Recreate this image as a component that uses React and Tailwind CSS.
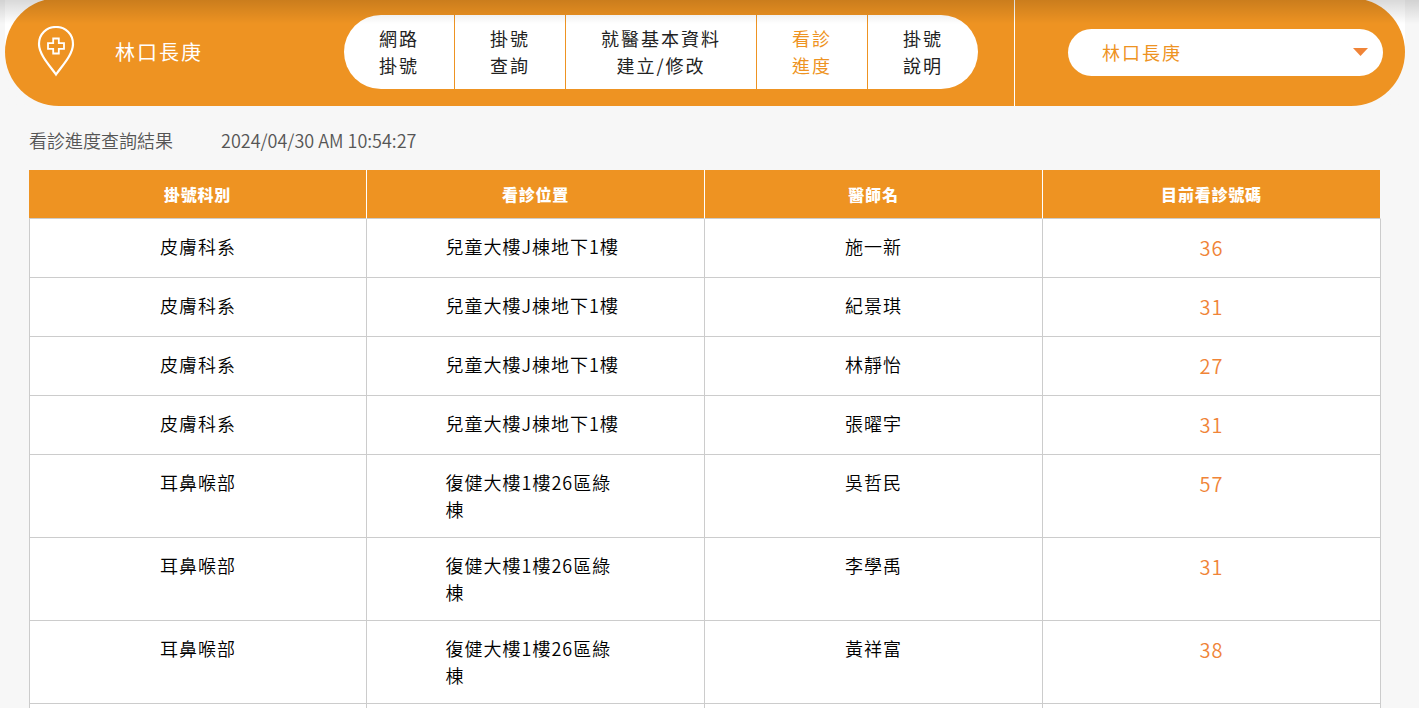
const navItems = [
  { lines: ["網路", "掛號"] },
  { lines: ["掛號", "查詢"] },
  { lines: ["就醫基本資料", "建立/修改"], wide: true },
  { lines: ["看診", "進度"], active: true },
  { lines: ["掛號", "說明"] },
];

const columns = ["掛號科別", "看診位置", "醫師名", "目前看診號碼"];

const rows = [
  { dept: "皮膚科系", place: "兒童大樓J棟地下1樓", doctor: "施一新", number: 36 },
  { dept: "皮膚科系", place: "兒童大樓J棟地下1樓", doctor: "紀景琪", number: 31 },
  { dept: "皮膚科系", place: "兒童大樓J棟地下1樓", doctor: "林靜怡", number: 27 },
  { dept: "皮膚科系", place: "兒童大樓J棟地下1樓", doctor: "張曜宇", number: 31 },
  { dept: "耳鼻喉部", place: "復健大樓1樓26區綠棟", doctor: "吳哲民", number: 57 },
  { dept: "耳鼻喉部", place: "復健大樓1樓26區綠棟", doctor: "李學禹", number: 31 },
  { dept: "耳鼻喉部", place: "復健大樓1樓26區綠棟", doctor: "黃祥富", number: 38 },
  { dept: "", place: "", doctor: "", number: "" },
];

function PinIcon() {
  return (
    <svg className="w-[38px] h-[52px]" viewBox="0 0 38 52" fill="none" stroke="white">
      <path
        d="M19 48.5C14 41 2 29 2 18C2 8 9.5 1 19 1S36 8 36 18C36 29 24 41 19 48.5Z"
        strokeWidth="2.2"
      />
      <path
        d="M16.2 12.500H21.800V17.200H27V22.800H21.800V27.500H16.200V22.800H11V17.200H16.200Z"
        strokeWidth="1.800"
      />
    </svg>
  );
}

function Header() {
  return (
    <header className="bg-linear-to-b from-white from-50% to-[#f7f7f7] to-50%">
      <div className="-mt-0.5 h-[108px] flex items-stretch rounded-full bg-[#ee9322] text-white overflow-hidden">
        <div className="flex-1 flex items-center gap-10 pl-8">
          <PinIcon />
          <h1 className="text-xl tracking-widest whitespace-nowrap">林口長庚</h1>
        </div>

        <nav className="flex items-center mr-9">
          <ul className="flex rounded-full overflow-hidden bg-white divide-x divide-[#ee9322]">
            {navItems.map((item) => (
              <li
                key={item.lines.join("")}
                className={item.wide ? "w-[191px]" : "w-[111px] last:w-[110px]"}
              >
                <a
                  href="#"
                  className={
                    "block py-[10px] text-center text-lg leading-[27px] tracking-[2px] " +
                    (item.active ? "text-[#ee9322]" : "text-[#222222]")
                  }
                >
                  {item.lines[0]}
                  <br />
                  {item.lines[1]}
                </a>
              </li>
            ))}
          </ul>
        </nav>

        <div className="w-[391px] flex items-center border-l border-white pl-[53px] pr-[22px]">
          <div className="relative w-full">
            <select
              aria-label="院區"
              className="w-full h-[47px] pl-[34px] pr-10 rounded-full appearance-none bg-white text-lg tracking-[2px] text-[#ee9322] cursor-pointer"
            >
              <option>林口長庚</option>
            </select>
            <svg
              className="absolute right-[15px] top-[19px] w-[15px] h-2 pointer-events-none"
              viewBox="0 0 15 8"
              fill="#f08437"
            >
              <path d="M0 0H15L7.500 8Z" />
            </svg>
          </div>
        </div>
      </div>
    </header>
  );
}

function Cell({ className = "", children }) {
  return (
    <td
      className={
        "border-r border-b first:border-l border-[#cccccc] py-[14px] align-top " + className
      }
    >
      {children}
    </td>
  );
}

function ProgressTable() {
  return (
    <table className="w-full table-fixed border-separate border-spacing-0">
      <thead>
        <tr className="text-white">
          {columns.map((name) => (
            <th
              key={name}
              className="h-[49px] bg-[#ee9322] border-r border-r-white last:border-r-[#f7f7f7] border-b border-b-[#cccccc] text-base font-black tracking-wider"
            >
              {name}
            </th>
          ))}
        </tr>
      </thead>
      <tbody className="bg-white text-lg leading-[27px] font-[350] tracking-[1px] text-black text-center">
        {rows.map((row, i) => (
          <tr key={i}>
            <Cell>{row.dept}</Cell>
            <Cell>
              <div className="w-[180px] mx-auto text-left">{row.place}</div>
            </Cell>
            <Cell>{row.doctor}</Cell>
            <Cell className="text-xl leading-[30px] text-[#f08437]">{row.number}</Cell>
          </tr>
        ))}
      </tbody>
    </table>
  );
}

export default function App() {
  return (
    <div
      lang="zh-Hant"
      className="relative min-h-screen bg-[#f7f7f7] pl-[5px] pr-[14px] overflow-hidden font-['Noto_Sans_CJK_TC',sans-serif]"
    >
      <Header />
      <main className="px-6">
        <div className="flex gap-12 pt-[21px] pb-4 text-lg leading-[27px] font-[350] text-[#555555]">
          <h2 className="font-[350]">看診進度查詢結果</h2>
          <time>2024/04/30 AM 10:54:27</time>
        </div>
        <ProgressTable />
      </main>
      <div className="absolute inset-x-0 top-0 h-6 bg-linear-to-b from-black/15 to-transparent pointer-events-none" />
    </div>
  );
}
